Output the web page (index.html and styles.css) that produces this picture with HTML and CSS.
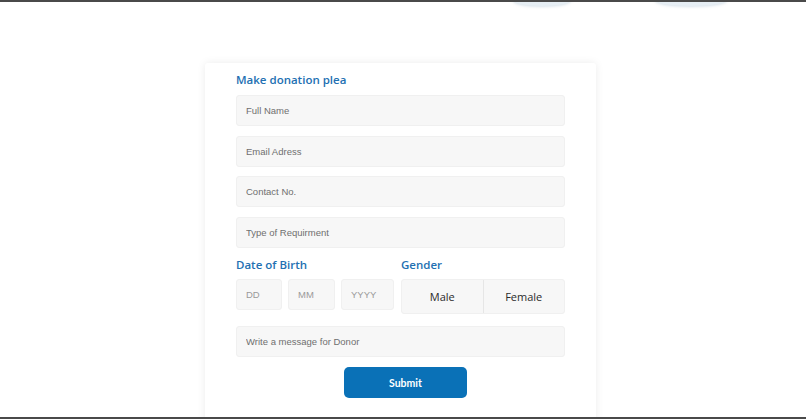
FILE: index.html
```html
<!DOCTYPE html>
<html lang="en">
<head>
<meta charset="utf-8">
<title>Make donation plea</title>
<link rel="stylesheet" href="styles.css">
</head>
<body>
<div class="frame">
  <div class="topbar"></div>
  <span class="blob blob-a"></span>
  <span class="blob blob-b"></span>
  <main class="main">
    <form class="card">
      <h2 class="title">Make donation plea</h2>
      <input class="field" type="text" placeholder="Full Name">
      <input class="field" type="text" placeholder="Email Adress">
      <input class="field" type="text" placeholder="Contact No.">
      <input class="field" type="text" placeholder="Type of Requirment">
      <div class="split">
        <div class="col">
          <h3 class="label">Date of Birth</h3>
          <div class="dob">
            <input class="small dd" type="text" placeholder="DD">
            <input class="small mm" type="text" placeholder="MM">
            <input class="small yy" type="text" placeholder="YYYY">
          </div>
        </div>
        <div class="col">
          <h3 class="label">Gender</h3>
          <div class="gender">
            <button type="button" class="opt">Male</button>
            <button type="button" class="opt">Female</button>
          </div>
        </div>
      </div>
      <input class="field msg" type="text" placeholder="Write a message for Donor">
      <div class="actions">
        <button type="submit" class="submit">Submit</button>
      </div>
    </form>
  </main>
  <div class="bottombar"></div>
</div>
</body>
</html>
```
FILE: styles.css
```css
* { box-sizing: border-box; }
html, body { margin: 0; padding: 0; background: #fff; }
body { font-family: "Liberation Sans", Arial, sans-serif; }

.frame {
  position: relative;
  height: 419px;
  display: flex;
  flex-direction: column;
  overflow: hidden;
}
.topbar { height: 2px; background: #4a4a4a; position: relative; z-index: 2; flex: none; }
.bottombar { height: 2px; background: #4a4a4a; flex: none; }

.blob {
  position: absolute;
  top: -6px;
  height: 12px;
  border-radius: 50%;
  background: #e6eef4;
  box-shadow: 0 1px 3px rgba(180, 200, 215, 0.5);
}
.blob-a { left: 513px; width: 58px; }
.blob-b { left: 655px; width: 72px; }

.main {
  flex: 1;
  min-height: 0;
  overflow: hidden;
  padding-top: 61px;
  display: flex;
  justify-content: center;
  align-items: flex-start;
}

.card {
  flex: none;
  width: 391px;
  margin-right: 5px;
  background: #fff;
  box-shadow: 0 0 8px rgba(0, 0, 0, 0.08);
  border-radius: 3px;
  padding: 9px 31px 30px;
}

.title, .label {
  margin: 0;
  font-family: "Open Sans", "Noto Sans", sans-serif;
  font-weight: 600;
  color: #2270b2;
  font-size: 11.5px;
  line-height: 16px;
}
.title { margin-bottom: 7px; }

.field, .small {
  display: block;
  height: 31px;
  background: #f7f7f7;
  border: 1px solid #f0f0f0;
  border-radius: 3px;
  font-family: "Liberation Sans", Arial, sans-serif;
  font-size: 9.5px;
  color: #444;
  padding: 0 9px;
  outline: none;
}
.field { width: 100%; margin: 0 0 9.6px; }
.field::placeholder { color: #6f6f6f; }

.split {
  display: grid;
  grid-template-columns: 158px 1fr;
  column-gap: 7px;
}
.label { margin-bottom: 6px; }
.dob { display: flex; gap: 6px; }
.small { width: 46px; margin: 0; }
.small.mm { width: 47px; }
.small.yy { width: 53px; }
.small::placeholder { color: #9a9a9a; }

.gender {
  display: flex;
  height: 35px;
  background: #f7f7f7;
  border: 1px solid #f0f0f0;
  border-radius: 3px;
}
.opt {
  flex: 1;
  background: transparent;
  border: none;
  font-family: "Open Sans", "Noto Sans", sans-serif;
  font-size: 11px;
  color: #2b2b2b;
  padding: 0;
  cursor: pointer;
}
.opt + .opt { border-left: 1px solid #e6e6e6; }

.msg { margin-top: 12px; margin-bottom: 10px; }

.actions { display: flex; justify-content: center; padding-left: 10px; }
.submit {
  width: 123px;
  height: 31px;
  background: #0a71b7;
  border: none;
  border-radius: 5px;
  color: #fff;
  font-family: Lato, "Open Sans", sans-serif;
  font-weight: 700;
  font-size: 10.5px;
  cursor: pointer;
}
```
